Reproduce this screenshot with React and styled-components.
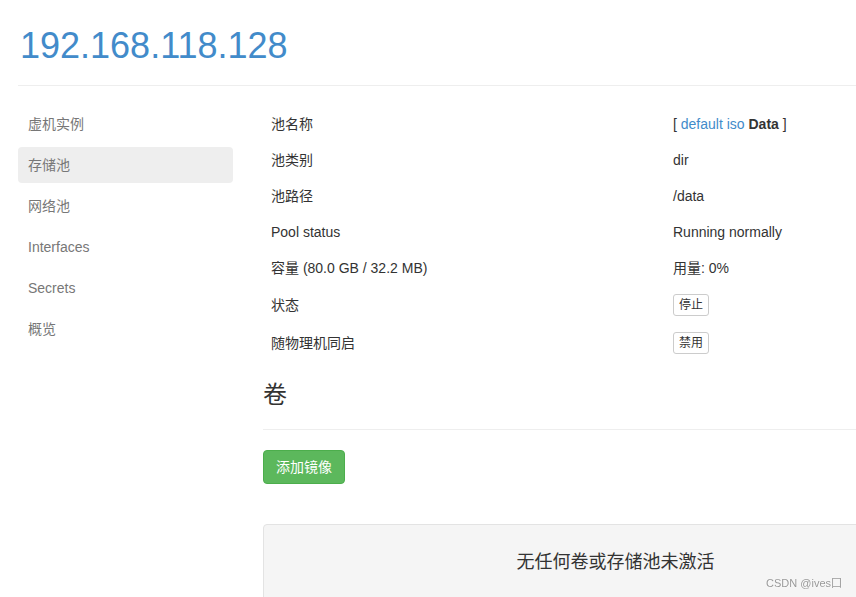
import styled, { createGlobalStyle } from "styled-components"

const GlobalStyle = createGlobalStyle`
    body {
        margin: 0;
        overflow: hidden;
        background: #fff;
        font-family: "Liberation Sans", Arial, "Noto Sans CJK SC", sans-serif;
        font-size: 14px;
        color: #333;
    }
`

const Page = styled.div`
    padding-left: 18px;
    width: 1100px;
`

const Header = styled.div`
    padding: 26px 0 19px;
    border-bottom: 1px solid #eee;
    margin-bottom: 20px;
`

const Title = styled.h1`
    margin: 0 0 0 2px;
    font-size: 36px;
    line-height: 40px;
    font-weight: 400;
    color: #428bca;
`

const Body = styled.div`
    display: flex;
    gap: 30px;
    align-items: flex-start;
`

const Sidebar = styled.ul`
    list-style: none;
    margin: 0;
    padding: 0;
    width: 215px;
    flex-shrink: 0;
`

const NavItem = styled.li`
    height: 36px;
    box-sizing: border-box;
    padding: 8px 10px;
    line-height: 20px;
    margin-bottom: 5px;
    border-radius: 4px;
    color: #777;
    background: ${p => (p.$active ? "#eee" : "transparent")};
`

const Content = styled.div`
    width: 804px;
    flex-shrink: 0;
`

const Table = styled.table`
    width: 100%;
    border-collapse: collapse;
    table-layout: fixed;
`

const Cell = styled.td`
    padding: 8px;
    line-height: 20px;
    vertical-align: middle;
`

const Link = styled.span`
    color: #428bca;
`

const SmallButton = styled.button`
    font-family: inherit;
    font-size: 12px;
    line-height: 18px;
    padding: 1px 5px;
    background: #fff;
    color: #333;
    border: 1px solid #ccc;
    border-radius: 3px;
    display: block;
`

const SectionHeader = styled.div`
    margin-top: 20px;
    padding-bottom: 21px;
    border-bottom: 1px solid #eee;
`

const SectionTitle = styled.h3`
    margin: 0;
    font-size: 24px;
    line-height: 26px;
    font-weight: 400;
    color: #333;
`

const SuccessButton = styled.button`
    margin-top: 20px;
    font-family: inherit;
    font-size: 14px;
    line-height: 20px;
    padding: 6px 12px;
    color: #fff;
    background: #5cb85c;
    border: 1px solid #4cae4c;
    border-radius: 4px;
`

const Well = styled.div`
    margin-top: 40px;
    width: 705px;
    min-height: 120px;
    box-sizing: border-box;
    padding: 27px 19px;
    background: #f5f5f5;
    border: 1px solid #e3e3e3;
    border-radius: 4px;
    text-align: center;
    font-size: 18px;
    line-height: 20px;
    color: #333;
`

const Watermark = styled.div`
    position: fixed;
    right: 14px;
    bottom: 7px;
    font-size: 11px;
    color: #999;
    text-shadow: 0 0 2px #fff;
`

const navItems = ["虚机实例", "存储池", "网络池", "Interfaces", "Secrets", "概览"]

const rows = [
    ["池名称", <>[ <Link>default iso</Link> <b>Data</b> ]</>],
    ["池类别", "dir"],
    ["池路径", "/data"],
    ["Pool status", "Running normally"],
    ["容量 (80.0 GB / 32.2 MB)", "用量: 0%"],
    ["状态", <SmallButton>停止</SmallButton>],
    ["随物理机同启", <SmallButton>禁用</SmallButton>],
]

export default function App() {
    return <>
        <GlobalStyle />
        <Page>
            <Header>
                <Title>192.168.118.128</Title>
            </Header>
            <Body>
                <Sidebar>
                    {navItems.map(item => (
                        <NavItem key={item} $active={item === "存储池"}>{item}</NavItem>
                    ))}
                </Sidebar>
                <Content>
                    <Table>
                        <tbody>
                            {rows.map(([label, value]) => (
                                <tr key={label}>
                                    <Cell>{label}</Cell>
                                    <Cell>{value}</Cell>
                                </tr>
                            ))}
                        </tbody>
                    </Table>
                    <SectionHeader>
                        <SectionTitle>卷</SectionTitle>
                    </SectionHeader>
                    <SuccessButton>添加镜像</SuccessButton>
                    <Well>无任何卷或存储池未激活</Well>
                </Content>
            </Body>
        </Page>
        <Watermark>CSDN @ives囗</Watermark>
    </>
}
